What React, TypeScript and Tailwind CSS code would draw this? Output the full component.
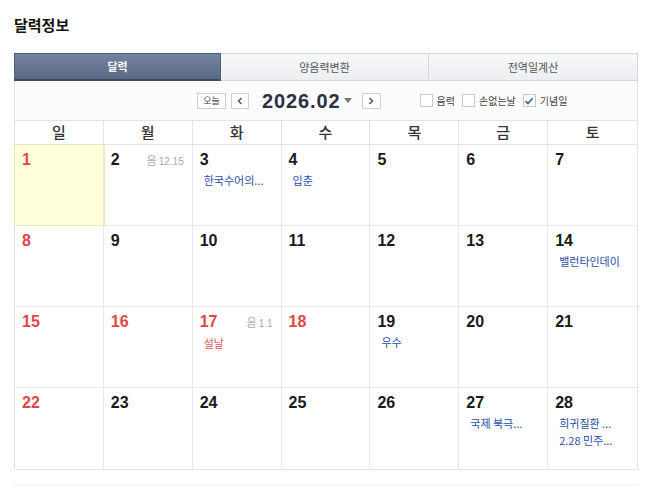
import React from "react";

type Cell = {
  d: number;
  red?: boolean;
  lunar?: string;
  events?: string[];
  eventRed?: boolean;
  today?: boolean;
};

const rows: Cell[][] = [
  [
    { d: 1, red: true, today: true },
    { d: 2, lunar: "12.15" },
    { d: 3, events: ["한국수어의..."] },
    { d: 4, events: ["입춘"] },
    { d: 5 },
    { d: 6 },
    { d: 7 },
  ],
  [
    { d: 8, red: true },
    { d: 9 },
    { d: 10 },
    { d: 11 },
    { d: 12 },
    { d: 13 },
    { d: 14, events: ["밸런타인데이"] },
  ],
  [
    { d: 15, red: true },
    { d: 16, red: true },
    { d: 17, red: true, lunar: "1.1", events: ["설날"], eventRed: true },
    { d: 18, red: true },
    { d: 19, events: ["우수"] },
    { d: 20 },
    { d: 21 },
  ],
  [
    { d: 22, red: true },
    { d: 23 },
    { d: 24 },
    { d: 25 },
    { d: 26 },
    { d: 27, events: ["국제 북극..."] },
    { d: 28, events: ["희귀질환 ...", "2.28 민주..."] },
  ],
];

const days = ["일", "월", "화", "수", "목", "금", "토"];
const KR = '"Noto Sans CJK KR", sans-serif';

function Check({ checked }: { checked?: boolean }) {
  return (
    <span className="w-[13px] h-[13px] border border-[#c9c9c9] bg-white flex items-center justify-center">
      {checked && (
        <svg width="10" height="10" viewBox="0 0 10 10">
          <path d="M1.5 5.2 L4 7.6 L8.6 2.2" stroke="#2f5fb8" strokeWidth="1.6" fill="none" />
        </svg>
      )}
    </span>
  );
}

export default function App() {
  return (
    <div
      className="w-[658px] h-[486px] bg-white overflow-hidden"
      style={{ fontFamily: '"Liberation Sans", "Noto Sans CJK KR", sans-serif' }}
    >
      <div className="ml-[14px] w-[624px] pt-[14px]">
        <div className="text-[15px] font-bold text-[#111] leading-[22px] h-[22px]" style={{ fontFamily: KR }}>
          달력정보
        </div>
        <div className="mt-[17px] flex h-[28px] text-[11px]" style={{ fontFamily: KR }}>
          <div className="w-[207px] flex items-center justify-center text-white font-bold bg-gradient-to-b from-[#7282a0] to-[#5a6a85] border border-[#4f5e77] border-b-2 border-b-[#3d4a60]">
            달력
          </div>
          <div className="w-[208px] flex items-center justify-center text-[#555] bg-gradient-to-b from-[#f7f8f9] to-[#eceef1] border-t border-b border-r border-[#d3d6db]">
            양음력변환
          </div>
          <div className="flex-1 flex items-center justify-center text-[#555] bg-gradient-to-b from-[#f7f8f9] to-[#eceef1] border-t border-b border-r border-[#d3d6db]">
            전역일계산
          </div>
        </div>
        <div className="h-[39px] flex items-center border-l border-r border-[#e3e3e3] bg-[#fcfcfc] pl-[182px]">
          <div className="w-[29px] h-[16px] border border-[#cfcfcf] bg-white flex items-center justify-center text-[9px] text-[#444]" style={{ fontFamily: KR }}>
            오늘
          </div>
          <div className="ml-[5px] w-[18px] h-[16px] border border-[#cfcfcf] bg-white flex items-center justify-center">
            <svg width="6" height="8" viewBox="0 0 6 8">
              <path d="M4.5 1 L1.5 4 L4.5 7" stroke="#555" strokeWidth="1.5" fill="none" />
            </svg>
          </div>
          <div className="ml-[13px] text-[20px] font-bold text-[#2c3042] leading-none tracking-[0.9px]">2026.02</div>
          <svg className="ml-[3px]" width="8" height="5" viewBox="0 0 8 5">
            <path d="M0 0 L8 0 L4 5 Z" fill="#777" />
          </svg>
          <div className="ml-[10px] w-[19px] h-[16px] border border-[#cfcfcf] bg-white flex items-center justify-center">
            <svg width="6" height="8" viewBox="0 0 6 8">
              <path d="M1.5 1 L4.5 4 L1.5 7" stroke="#555" strokeWidth="1.5" fill="none" />
            </svg>
          </div>
          <div className="ml-[39px] flex items-center text-[10px] text-[#444]" style={{ fontFamily: KR }}>
            <Check />
            <span className="ml-[4px]">음력</span>
            <span className="ml-[7px]"><Check /></span>
            <span className="ml-[4px]">손없는날</span>
            <span className="ml-[7px]"><Check checked /></span>
            <span className="ml-[4px]">기념일</span>
          </div>
        </div>
        <div className="border border-[#e3e3e3]">
          <div className="grid grid-cols-7 h-[24px] border-b border-[#e3e3e3]">
            {days.map((d, i) => (
              <div
                key={d}
                className={`flex items-center justify-center text-[15px] font-medium text-[#333] ${i < 6 ? "border-r border-[#e3e3e3]" : ""}`}
                style={{ fontFamily: KR }}
              >
                {d}
              </div>
            ))}
          </div>
          {rows.map((row, ri) => (
            <div key={ri} className={`grid grid-cols-7 h-[81px] ${ri < 3 ? "border-b border-[#e8e8e8]" : ""}`}>
              {row.map((c, ci) => (
                <div
                  key={c.d}
                  className={`relative pl-[7px] pt-[5px] ${ci < 6 ? "border-r border-[#e8e8e8]" : ""} ${c.today ? "bg-[#ffffdc] outline outline-1 outline-[#ebe8b8]" : ""}`}
                >
                  <div className="flex items-start justify-between pr-[8px]">
                    <span className={`text-[16px] font-bold leading-[20px] ${c.red ? "text-[#e04848]" : "text-[#1a1a1a]"}`}>
                      {c.d}
                    </span>
                    {c.lunar && (
                      <span className="text-[10px] text-[#aaa] leading-[18px] mt-[1px]">
                        <span style={{ fontFamily: KR }} className="text-[11px]">음</span>
                        <span className="ml-[2px]">{c.lunar}</span>
                      </span>
                    )}
                  </div>
                  {c.events && (
                    <div className="mt-[2px] pl-[4px] text-[11px] leading-[17px]" style={{ fontFamily: KR }}>
                      {c.events.map((e) => (
                        <div key={e} className={c.eventRed ? "text-[#e05a5a]" : "text-[#2a4fa6]"}>
                          {e}
                        </div>
                      ))}
                    </div>
                  )}
                </div>
              ))}
            </div>
          ))}
        </div>
        <div className="mt-[15px] h-px bg-[#eeeeee]" />
      </div>
    </div>
  );
}
